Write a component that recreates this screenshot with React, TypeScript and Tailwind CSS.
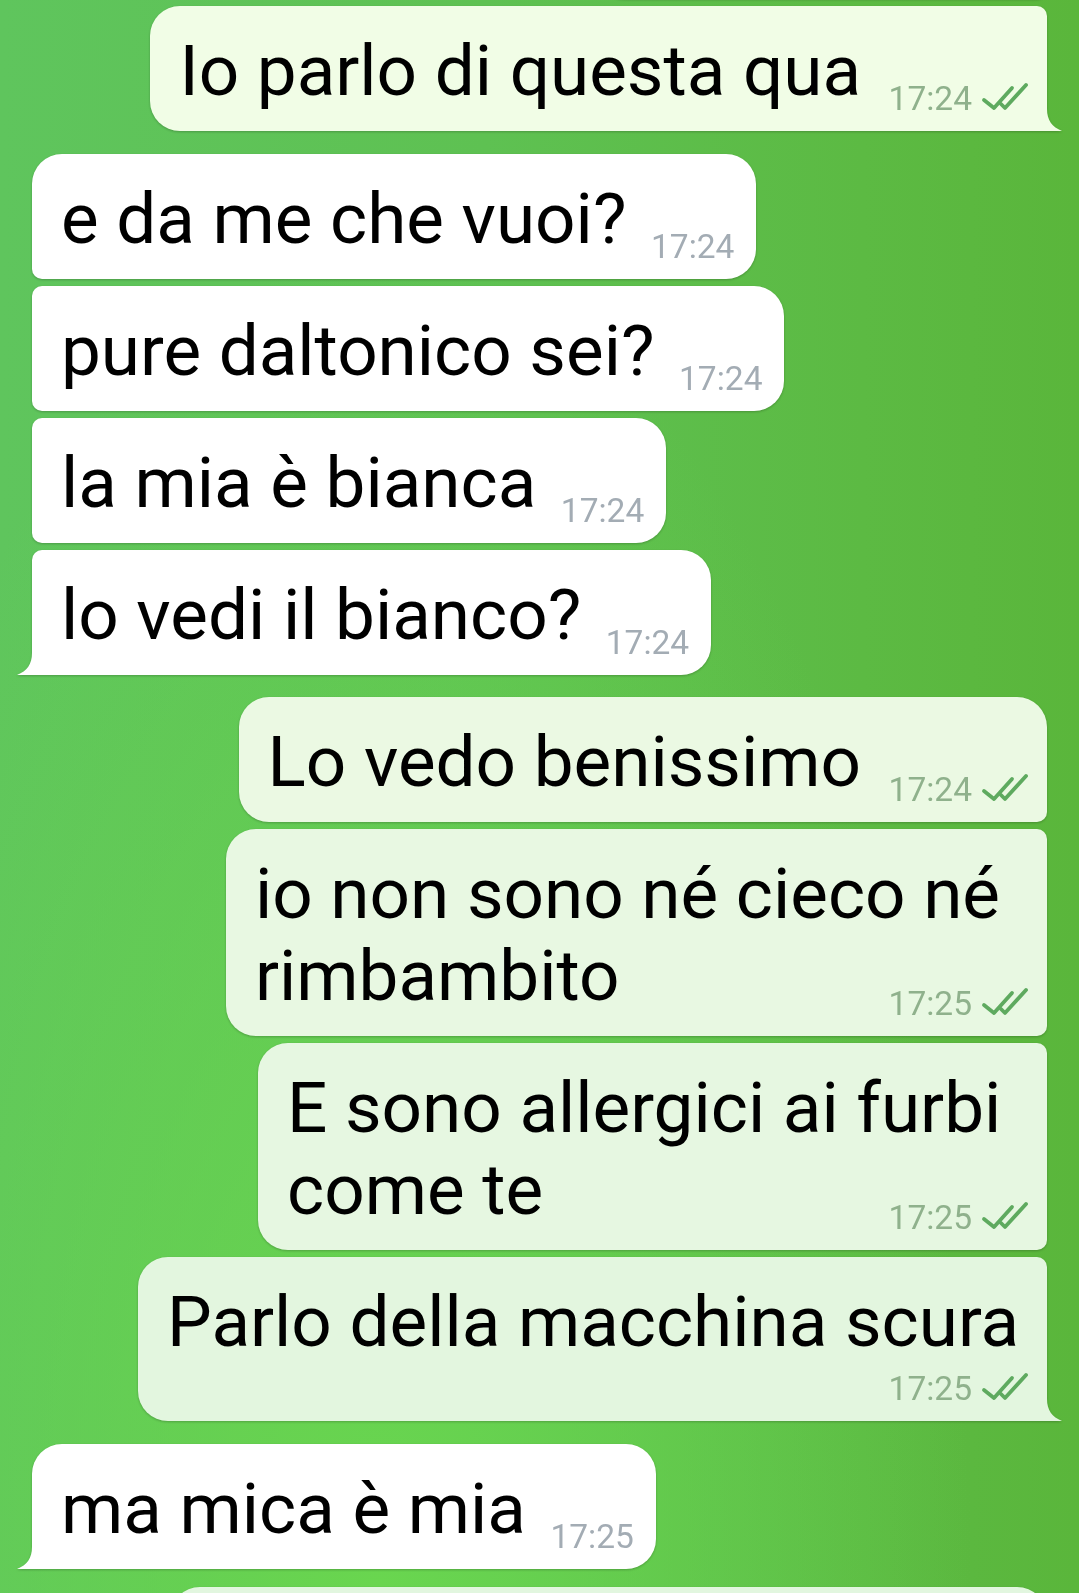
import clsx from 'clsx'
import type { ReactNode } from 'react'

type Pos = 'first' | 'middle' | 'last' | 'single'

const inCorners: Record<Pos, string> = {
  first: 'rounded-[30px] rounded-bl-[10px]',
  middle: 'rounded-[30px] rounded-l-[10px]',
  last: 'rounded-[30px] rounded-tl-[10px] rounded-bl-none',
  single: 'rounded-[30px] rounded-bl-none',
}

const outCorners: Record<Pos, string> = {
  first: 'rounded-[30px] rounded-br-[10px]',
  middle: 'rounded-[30px] rounded-r-[10px]',
  last: 'rounded-[30px] rounded-tr-[10px] rounded-br-none',
  single: 'rounded-[30px] rounded-br-none',
}

function Checks() {
  return (
    <svg
      width="48"
      height="30"
      viewBox="0 0 48 30"
      fill="none"
      className="mt-[-2px] stroke-[#5eaa5f]"
      strokeWidth="3.8"
      strokeLinecap="round"
      strokeLinejoin="round"
    >
      <path d="M3 19 L13 27 L31 7" />
      <path d="M20 23 L24 27 L45 4" />
    </svg>
  )
}

// piccola coda in basso, come nei fumetti di Telegram
function Tail({ out, fill }: { out: boolean; fill: string }) {
  if (out) {
    return (
      <svg width="16" height="22" viewBox="0 0 16 22" className={clsx('absolute bottom-0 right-[-15px]', fill)}>
        <path d="M0 0 L1 0 C1 11 6 18 16 22 L0 22 Z" />
      </svg>
    )
  }
  return (
    <svg width="16" height="22" viewBox="0 0 16 22" className={clsx('absolute bottom-0 left-[-15px]', fill)}>
      <path d="M16 0 L15 0 C15 11 10 18 0 22 L16 22 Z" />
    </svg>
  )
}

function Bubble({
  out = false,
  text,
  time,
  pos,
  bg,
  tailFill,
  width,
  className,
}: {
  out?: boolean
  text: ReactNode
  time: string
  pos: Pos
  bg: string
  tailFill: string
  width?: string
  className?: string
}) {
  const tail = pos === 'last' || pos === 'single'
  return (
    <div className={clsx('flex', out ? 'justify-end' : 'justify-start', className)}>
      <div
        className={clsx(
          'relative grid pl-[29px] pt-[24px] pb-[19px] drop-shadow-[0_1px_1px_rgba(0,0,0,0.22)]',
          out ? 'pr-[18px]' : 'pr-[22px]',
          out ? outCorners[pos] : inCorners[pos],
          bg,
          width
        )}
      >
        <div className="col-start-1 row-start-1 flow-root text-[71px] leading-[82px] text-black">
          {text}
          <span className={clsx('float-right h-[39px]', out ? 'w-[168px]' : 'w-[108px]')} />
        </div>
        <div
          className={clsx(
            'col-start-1 row-start-1 self-end justify-self-end mb-[-3px] flex items-start gap-[9px] text-[33.5px] leading-[32px]',
            out ? 'text-[#8fb18c]' : 'text-[#a3acb4]'
          )}
        >
          <span>{time}</span>
          {out && <Checks />}
        </div>
        {tail && <Tail out={out} fill={tailFill} />}
      </div>
    </div>
  )
}

export default function App() {
  return (
    <div className="h-[1593px] w-full overflow-hidden bg-[radial-gradient(ellipse_at_35%_100%,#69d64f_0%,rgba(105,214,79,0)_60%),linear-gradient(90deg,#5fc55d_0%,#5ec152_45%,#5cba43_80%,#5ab63b_100%)] font-[Roboto,sans-serif]">
      <div className="flex flex-col px-[32px] pt-[6px]">
        {/* fumetto precedente, visibile solo l'ombra */}
        <div className="mt-[-107px] flex justify-end">
          <div className="h-[100px] w-[452px] rounded-[30px] rounded-r-[10px] bg-[#f2fde8] drop-shadow-[0_1px_1px_rgba(0,0,0,0.22)]" />
        </div>

        <Bubble out pos="last" className="mt-[7px]" text="Io parlo di questa qua" time="17:24" bg="bg-[#f1fde6]" tailFill="fill-[#f1fde6]" />

        <Bubble pos="first" className="mt-[23px]" text="e da me che vuoi?" time="17:24" bg="bg-white" tailFill="fill-white" />
        <Bubble pos="middle" className="mt-[7px]" text="pure daltonico sei?" time="17:24" bg="bg-white" tailFill="fill-white" />
        <Bubble pos="middle" className="mt-[7px]" text="la mia è bianca" time="17:24" bg="bg-white" tailFill="fill-white" />
        <Bubble pos="last" className="mt-[7px]" text="lo vedi il bianco?" time="17:24" bg="bg-white" tailFill="fill-white" />

        <Bubble out pos="first" className="mt-[22px]" text="Lo vedo benissimo" time="17:24" bg="bg-[#ebf9e3]" tailFill="fill-[#ebf9e3]" />
        <Bubble
          out
          pos="middle"
          className="mt-[7px]"
          width="w-[821px]"
          text="io non sono né cieco né rimbambito"
          time="17:25"
          bg="bg-[#e8f8e2]"
          tailFill="fill-[#e8f8e2]"
        />
        <Bubble
          out
          pos="middle"
          className="mt-[7px]"
          width="w-[789px]"
          text="E sono allergici ai furbi come te"
          time="17:25"
          bg="bg-[#e6f7e1]"
          tailFill="fill-[#e6f7e1]"
        />
        <Bubble
          out
          pos="last"
          className="mt-[7px]"
          width="w-[909px]"
          text="Parlo della macchina scura"
          time="17:25"
          bg="bg-[#e3f6df]"
          tailFill="fill-[#e3f6df]"
        />

        <Bubble pos="single" className="mt-[23px]" text="ma mica è mia" time="17:25" bg="bg-white" tailFill="fill-white" />

        {/* fumetto successivo, appena visibile */}
        <div className="mt-[18px] flex justify-end">
          <div className="h-[125px] w-[877px] rounded-[30px] rounded-br-[10px] bg-[#e2f6df] drop-shadow-[0_1px_1px_rgba(0,0,0,0.22)]" />
        </div>
      </div>
    </div>
  )
}
